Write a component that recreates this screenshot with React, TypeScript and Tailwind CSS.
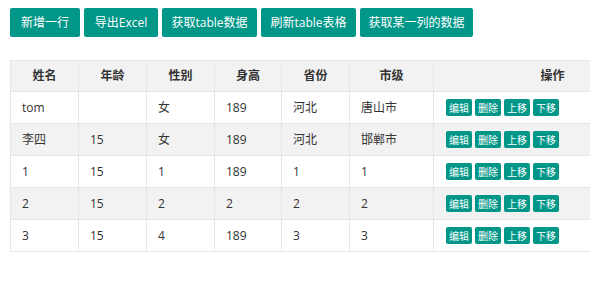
import React from "react";

const toolbar = [
  { title: "新增一行", w: "w-[70px]" },
  { title: "导出Excel", w: "w-[74px]" },
  { title: "获取table数据", w: "w-[95px]" },
  { title: "刷新table表格", w: "w-[95px]" },
  { title: "获取某一列的数据", w: "w-[113px]" },
];

const columns = ["姓名", "年龄", "性别", "身高", "省份", "市级", "操作"];

const rows = [
  ["tom", "", "女", "189", "河北", "唐山市"],
  ["李四", "15", "女", "189", "河北", "邯郸市"],
  ["1", "15", "1", "189", "1", "1"],
  ["2", "15", "2", "2", "2", "2"],
  ["3", "15", "4", "189", "3", "3"],
];

const actions = ["编辑", "删除", "上移", "下移"];

const gridCols = "grid grid-cols-[68px_68px_68px_67px_68px_84px_238px]";

const App = () => {
  return (
    <div
      className="w-[590px] h-[296px] overflow-hidden bg-white text-[#333] text-[12px]"
      style={{ fontFamily: '"Open Sans", "Noto Sans CJK SC", sans-serif' }}
    >
      <div className="flex gap-1 pl-[10px] pt-2">
        {toolbar.map((b) => (
          <button
            key={b.title}
            className={`${b.w} h-[29px] flex items-center justify-center rounded-[2px] bg-[#009688] text-white text-[12px] leading-none`}
          >
            {b.title}
          </button>
        ))}
      </div>

      <div className="ml-[10px] mt-[23px] w-[662px] border-l border-t border-[#e6e6e6]">
        <div className={`${gridCols} bg-[#f2f2f2]`}>
          {columns.map((c) => (
            <div
              key={c}
              className="h-[31px] flex items-center justify-center border-r border-b border-[#e6e6e6] font-bold"
            >
              {c}
            </div>
          ))}
        </div>
        {rows.map((r, i) => (
          <div
            key={i}
            className={`${gridCols} ${i % 2 === 1 ? "bg-[#f2f2f2]" : "bg-white"}`}
          >
            {r.map((cell, j) => (
              <div
                key={j}
                className="h-[32px] flex items-center pl-[11px] border-r border-b border-[#e6e6e6]"
              >
                {cell}
              </div>
            ))}
            <div className="h-[32px] flex items-center gap-[3px] pl-3 border-r border-b border-[#e6e6e6]">
              {actions.map((a) => (
                <span
                  key={a}
                  className="w-[26px] h-[17px] flex items-center justify-center rounded-[2px] bg-[#009688] text-white text-[10px] leading-none"
                >
                  {a}
                </span>
              ))}
            </div>
          </div>
        ))}
      </div>
    </div>
  );
};

export default App;
